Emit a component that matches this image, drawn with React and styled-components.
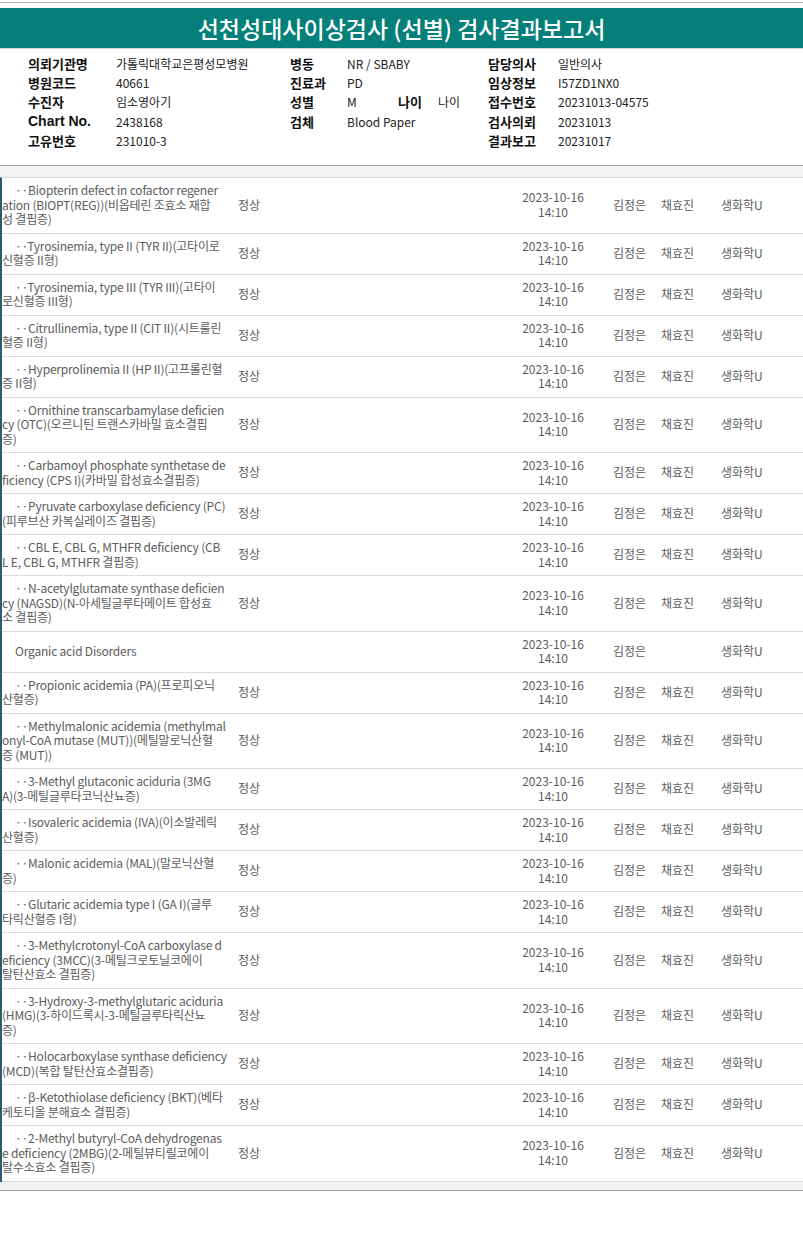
import React from 'react'
import styled, {createGlobalStyle} from 'styled-components'

const rows = [
  {name: ['··Biopterin defect in cofactor regener', 'ation (BIOPT(REG))(비옵테린 조효소 재합', '성 결핍증)'], result: '정상'},
  {name: ['··Tyrosinemia, type II (TYR II)(고타이로', '신혈증 II형)'], result: '정상'},
  {name: ['··Tyrosinemia, type III (TYR III)(고타이', '로신혈증 III형)'], result: '정상'},
  {name: ['··Citrullinemia, type II (CIT II)(시트룰린', '혈증 II형)'], result: '정상'},
  {name: ['··Hyperprolinemia II (HP II)(고프롤린혈', '증 II형)'], result: '정상'},
  {name: ['··Ornithine transcarbamylase deficien', 'cy (OTC)(오르니틴 트랜스카바밀 효소결핍', '증)'], result: '정상'},
  {name: ['··Carbamoyl phosphate synthetase de', 'ficiency (CPS I)(카바밀 합성효소결핍증)'], result: '정상'},
  {name: ['··Pyruvate carboxylase deficiency (PC)', '(피루브산 카복실레이즈 결핍증)'], result: '정상'},
  {name: ['··CBL E, CBL G, MTHFR deficiency (CB', 'L E, CBL G, MTHFR 결핍증)'], result: '정상'},
  {name: ['··N-acetylglutamate synthase deficien', 'cy (NAGSD)(N-아세틸글루타메이트 합성효', '소 결핍증)'], result: '정상'},
  {name: ['Organic acid Disorders'], result: '', group: true},
  {name: ['··Propionic acidemia (PA)(프로피오닉', '산혈증)'], result: '정상'},
  {name: ['··Methylmalonic acidemia (methylmal', 'onyl-CoA mutase (MUT))(메틸말로닉산혈', '증 (MUT))'], result: '정상'},
  {name: ['··3-Methyl glutaconic aciduria (3MG', 'A)(3-메틸글루타코닉산뇨증)'], result: '정상'},
  {name: ['··Isovaleric acidemia (IVA)(이소발레릭', '산혈증)'], result: '정상'},
  {name: ['··Malonic acidemia (MAL)(말로닉산혈', '증)'], result: '정상'},
  {name: ['··Glutaric acidemia type I (GA I)(글루', '타릭산혈증 I형)'], result: '정상'},
  {name: ['··3-Methylcrotonyl-CoA carboxylase d', 'eficiency (3MCC)(3-메틸크로토닐코에이', '탈탄산효소 결핍증)'], result: '정상'},
  {name: ['··3-Hydroxy-3-methylglutaric aciduria', '(HMG)(3-하이드록시-3-메틸글루타릭산뇨', '증)'], result: '정상'},
  {name: ['··Holocarboxylase synthase deficiency', '(MCD)(복합 탈탄산효소결핍증)'], result: '정상'},
  {name: ['··β-Ketothiolase deficiency (BKT)(베타', '케토티올 분해효소 결핍증)'], result: '정상'},
  {name: ['··2-Methyl butyryl-CoA dehydrogenas', 'e deficiency (2MBG)(2-메틸뷰티릴코에이', '탈수소효소 결핍증)'], result: '정상'},
]

function App() {
  return (
    <Page>
      <GlobalStyle/>
      <TopRule/>
      <TitleBar>선천성대사이상검사 (선별) 검사결과보고서</TitleBar>

      <InfoGrid>
        <Label>의뢰기관명</Label><Value>가톨릭대학교은평성모병원</Value>
        <Label>병동</Label><Value $span={3}>NR / SBABY</Value>
        <Label>담당의사</Label><Value>일반의사</Value>

        <Label>병원코드</Label><Value>40661</Value>
        <Label>진료과</Label><Value $span={3}>PD</Value>
        <Label>임상정보</Label><Value>I57ZD1NX0</Value>

        <Label>수진자</Label><Value>임소영아기</Value>
        <Label>성별</Label><Value>M</Value>
        <Label>나이</Label><Value>나이</Value>
        <Label>접수번호</Label><Value>20231013-04575</Value>

        <Label $latin>Chart No.</Label><Value>2438168</Value>
        <Label>검체</Label><Value $span={3}>Blood Paper</Value>
        <Label>검사의뢰</Label><Value>20231013</Value>

        <Label>고유번호</Label><Value>231010-3</Value>
        <Value $span={4}/>
        <Label>결과보고</Label><Value>20231017</Value>
      </InfoGrid>

      <ListFrame>
        <List>
          {rows.map((row, i) => (
            <Row key={i}>
              <NameCell>
                {row.name.map((line, j) => <NameLine key={j}>{line}</NameLine>)}
              </NameCell>
              <ResultCell>{row.result}</ResultCell>
              <DateCell>2023-10-16<br/>14:10</DateCell>
              <StaffCell>김정은</StaffCell>
              <StaffCell>{row.group ? '' : '채효진'}</StaffCell>
              <StaffCell>생화학U</StaffCell>
            </Row>
          ))}
        </List>
      </ListFrame>
    </Page>
  )
}

const GlobalStyle = createGlobalStyle`
  body {
    margin: 0;
    background: #fff;
    font-family: "Noto Sans CJK KR", "Noto Sans", sans-serif;
  }
`

const Page = styled.div`
  width: 803px;
  padding-top: 2px;
`

const TopRule = styled.div`
  border-top: 1px solid #b4b4b4;
`

const TitleBar = styled.h1`
  margin: 5px 0 0;
  height: 40px;
  background: #047f79;
  border-bottom: 1px solid #cfd8d7;
  color: #fff;
  font-family: "Noto Sans CJK KR", sans-serif;
  font-weight: 500;
  font-size: 23px;
  line-height: 40px;
  text-align: center;
`

const InfoGrid = styled.div`
  display: grid;
  grid-template-columns: 88px 174px 57px 51px 40px 50px 70px 1fr;
  grid-template-rows: 19px 19px 19px 20px 18px;
  align-items: center;
  padding: 5px 0 16px 28px;
  border-bottom: 1px solid #9e9e9e;
`

const Label = styled.div`
  font-family: ${p => p.$latin ? '"Liberation Sans", Arial, sans-serif' : '"Noto Sans CJK KR", sans-serif'};
  font-weight: 700;
  font-size: ${p => p.$latin ? '14px' : '13px'};
  color: #111;
  white-space: nowrap;
`

const Value = styled.div`
  grid-column: span ${p => p.$span || 1};
  font-family: "Noto Sans CJK KR", sans-serif;
  font-size: 12px;
  color: #222;
  white-space: nowrap;
`

const ListFrame = styled.div`
  background: #f2f2f2;
  padding: 11px 0 8px;
  border-bottom: 1px solid #9e9e9e;
`

const List = styled.div`
  background: #fff;
  border-top: 1px solid #dcdcdc;
  border-left: 2px solid #275f6d;
`

const Row = styled.div`
  display: grid;
  grid-template-columns: 223px 278px 100px 48px 60px 1fr;
  align-items: center;
  min-height: 41px;
  padding: 5px 0 6px;
  box-sizing: border-box;
  border-bottom: 1px solid #dcdcdc;
  font-size: 12px;
  line-height: 14.5px;
  color: #5c5c5c;
`

const NameCell = styled.div`
  white-space: nowrap;
  letter-spacing: -0.2px;
`

const NameLine = styled.div`
  &:first-child {
    padding-left: 13px;
  }
`

const ResultCell = styled.div`
  padding-left: 13px;
`

const DateCell = styled.div`
  text-align: center;
`

const StaffCell = styled.div`
  padding-left: 10px;
  white-space: nowrap;
`

export default App
